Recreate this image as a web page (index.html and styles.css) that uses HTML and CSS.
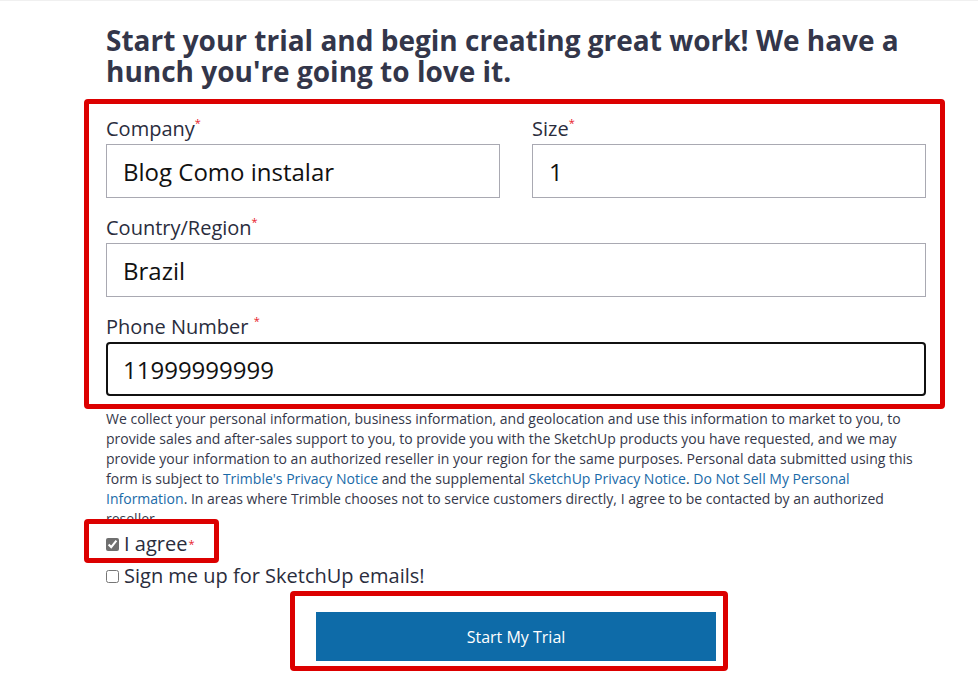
FILE: index.html
```html
<!DOCTYPE html>
<html lang="en">
<head>
  <meta charset="UTF-8">
  <title>SketchUp | Start your trial</title>
  <link rel="stylesheet" href="styles.css">
</head>
<body>
  <div class="page">
    <h1>Start your trial and begin creating great work! We have a hunch you're going to love it.</h1>

    <div class="mark fields">
      <div class="row">
        <div class="field">
          <label for="company">Company<span class="req">*</span></label>
          <input type="text" id="company" value="Blog Como instalar">
        </div>
        <div class="field">
          <label for="size">Size<span class="req">*</span></label>
          <input type="text" id="size" value="1">
        </div>
      </div>
      <div class="field">
        <label for="country">Country/Region<span class="req">*</span></label>
        <input type="text" id="country" value="Brazil">
      </div>
      <div class="field">
        <label for="phone">Phone Number <span class="req">*</span></label>
        <input type="text" id="phone" class="active" value="11999999999">
      </div>
    </div>

    <p class="notice">
      We collect your personal information, business information, and geolocation and use this information to market to you, to provide sales and after-sales support to you, to provide you with the SketchUp products you have requested, and we may provide your information to an authorized reseller in your region for the same purposes. Personal data submitted using this form is subject to <a href="#">Trimble's Privacy Notice</a> and the supplemental <a href="#">SketchUp Privacy Notice</a>. <a href="#">Do Not Sell My Personal Information</a>. In areas where Trimble chooses not to service customers directly, I agree to be contacted by an authorized reseller.
    </p>

    <div class="mark agree">
      <label class="check"><input type="checkbox" checked> I agree<span class="req">*</span></label>
    </div>
    <label class="check signup"><input type="checkbox"> Sign me up for SketchUp emails!</label>

    <div class="submit-row">
      <div class="mark submit">
        <button type="button">Start My Trial</button>
      </div>
    </div>
  </div>
</body>
</html>
```

FILE: styles.css
```css
html {
  border-top: 1px solid #f0f0f0;
}

body {
  font-family: 'Open Sans', 'Noto Sans', sans-serif;
  background: #fff;
  color: #222;
  margin: 0;
  padding: 0;
}

.page {
  width: 820px;
  margin-left: 106px;
}

h1 {
  font-size: 28px;
  line-height: 31px;
  font-weight: 700;
  color: #33364a;
  margin: 24px 0 12px;
}

/* red annotation boxes */
.mark {
  border: 5px solid #dc0000;
  border-radius: 4px;
  background: #fff;
  box-sizing: border-box;
}

.fields {
  margin: 0 -19px 0 -22px;
  padding: 12px 14px 8px 17px;
  display: flex;
  flex-direction: column;
  gap: 17px;
}

.row {
  display: flex;
  gap: 32px;
}

.row .field {
  flex: 1;
}

.field label {
  display: block;
  font-size: 20px;
  line-height: 26px;
  color: #2a2d3d;
  margin-bottom: 2px;
}

.req {
  color: #e8202a;
  font-size: 11px;
  vertical-align: top;
  line-height: 14px;
}

.field input {
  display: block;
  width: 100%;
  height: 54px;
  box-sizing: border-box;
  border: 1px solid #a9a9b2;
  border-radius: 0;
  padding: 0 16px;
  font-family: inherit;
  font-size: 24px;
  color: #111;
  outline: none;
}

.field input.active {
  border: 2px solid #111;
  border-radius: 4px;
  padding-left: 15px;
}

.notice {
  font-size: 14px;
  line-height: 20px;
  color: #35384a;
  margin: 0;
}

.notice a {
  color: #1a6aa8;
  text-decoration: none;
}

.check {
  display: flex;
  align-items: center;
  font-size: 20px;
  line-height: 26px;
  color: #2a2d3d;
}

.check input {
  width: 13px;
  height: 13px;
  margin: 1px 5px 0 0;
  accent-color: #6f6f6f;
}

.agree {
  position: relative;
  display: inline-block;
  margin: -10px 0 0 -22px;
  padding: 7px 20px 1px 17px;
}

.agree .req {
  margin-left: 1px;
}

.signup {
  margin-top: 0;
}

.submit-row {
  display: flex;
  justify-content: center;
  margin-top: 2px;
}

.submit {
  margin-left: -14px;
  padding: 16px 7px 5px 21px;
}

.submit button {
  display: block;
  width: 400px;
  height: 49px;
  border: none;
  background: #0e6ba8;
  color: #fff;
  font-family: inherit;
  font-size: 16px;
  cursor: pointer;
}
```
